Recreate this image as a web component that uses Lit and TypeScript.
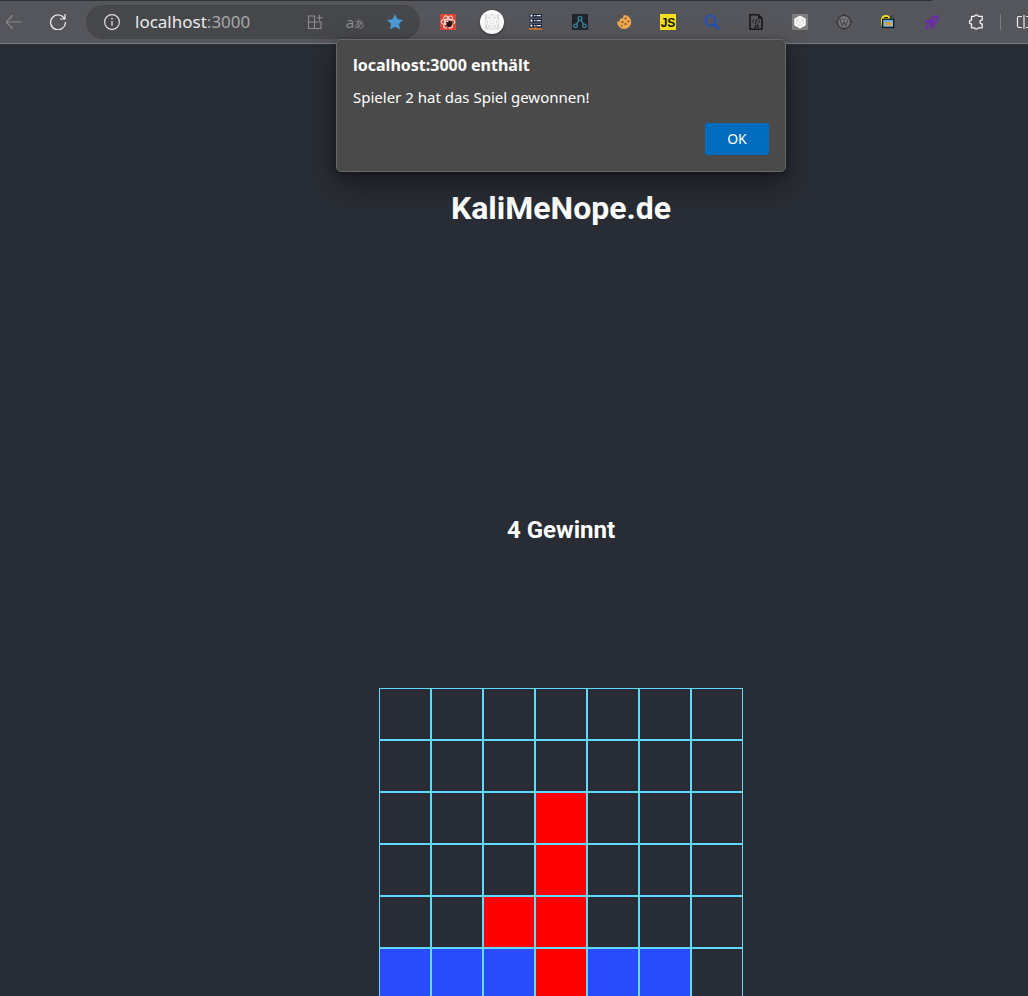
import { LitElement, html, css, svg } from "lit";
import { customElement } from "lit/decorators.js";
import { classMap } from "lit/directives/class-map.js";

const BOARD = [
  ".......",
  ".......",
  "...R...",
  "...R...",
  "..RR...",
  "BBBRBB.",
];

const icon = (content: unknown, size = 16) =>
  html`<svg width=${size} height=${size} viewBox="0 0 16 16" fill="none" aria-hidden="true">${content}</svg>`;

const atom = (stroke: string, hub: string) => svg`
  <g stroke=${stroke} stroke-width="1.1">
    <ellipse cx="8" cy="8" rx="6.8" ry="2.7"/>
    <ellipse cx="8" cy="8" rx="6.8" ry="2.7" transform="rotate(60 8 8)"/>
    <ellipse cx="8" cy="8" rx="6.8" ry="2.7" transform="rotate(120 8 8)"/>
  </g>
  <circle cx="8" cy="8" r="1.4" fill=${hub}/>`;

const EXTENSIONS: { name: string; art: unknown; round?: boolean }[] = [
  {
    name: "React Developer Tools",
    art: svg`<rect width="16" height="16" fill="#dc4436"/>${atom("#f6dcd8", "#fff")}
      <ellipse cx="9.300" cy="10" rx="2.600" ry="3.200" transform="rotate(35 9.300 10)" fill="#25120f"/>
      <path d="M5.800 8.300 8 9.500M5.500 11.500l2.500-.8M7 14l1.200-1.800M12.300 6.500l-1.500 1.800M13.500 10h-2" stroke="#25120f" stroke-width=".8"/>`,
  },
  {
    name: "React",
    round: true,
    art: svg`<rect x=".5" y=".5" width="15" height="15" rx="1" fill="#e0e0e0"/>${atom("#f9f9f9", "#fff")}`,
  },
  {
    name: "Server",
    art: svg`${[0, 5, 10].map(
      (y) => svg`<rect x="1.500" y=${y} width="12.500" height="3.500" rx="1" fill="#14213f"/>
        <circle cx="3.500" cy=${y + 1.7} r="1.100" fill="#fff"/>
        <path d=${`M6 ${y + 1.7}h1.500M8.500 ${y + 1.7}h4.500`} stroke="#dfe5f0" stroke-width="1.200"/>`
    )}<path d="M1 14.900h13M7.500 13v2.500" stroke="#e2792a" stroke-width="1.500"/>`,
  },
  {
    name: "Graph",
    art: svg`<rect width="16" height="16" fill="#20242b"/>
      <g stroke="#3f93ab" stroke-width="1.200"><circle cx="8" cy="4.500" r="2"/><circle cx="3.600" cy="11.800" r="1.800"/><circle cx="12.400" cy="11.800" r="1.800"/>
      <path d="M7 6.300 4.500 10M9 6.300l2.500 3.700"/></g>`,
  },
  {
    name: "Cookies",
    art: svg`<path d="M6 4.300c1.200-.2 1.500-1.500 1.300-2.900 1-.4 2.400-.3 3.600.2A7 7 0 1 1 1.200 7.500c1.200.4 2.600-.1 2.600-1.400.2-1 1-1.600 2.200-1.800z" fill="#f1a850"/>
      <g fill="#6b452c"><circle cx="9.500" cy="4.500" r=".9"/><circle cx="12.500" cy="7.500" r=".9"/><circle cx="6.500" cy="8" r=".9"/><circle cx="9.500" cy="10" r="1"/><circle cx="5.500" cy="11.800" r=".8"/><circle cx="3" cy="2.500" r=".9"/><circle cx="5.300" cy="1.500" r=".5"/></g>`,
  },
  {
    name: "JavaScript",
    art: svg`<rect width="16" height="16" fill="#f7df1e"/><text class="js" x="8" y="12.500" text-anchor="middle">JS</text>`,
  },
  {
    name: "Search",
    art: svg`<circle cx="6.500" cy="6.500" r="5" stroke="#2350b8" stroke-width="2.200"/><path d="m10 10 5 5" stroke="#2350b8" stroke-width="2.500"/>`,
  },
  {
    name: "Script",
    art: svg`<path d="M2 .8h8.500L14 4.300v11H2z" stroke="#19191b" stroke-width="1.600"/><path d="M10 .8v4h4z" fill="#19191b"/>
      <path d="M6 5.500 4.300 7.500 6 9.300M10 5.500l1.700 2L10 9.300M8.600 5.300l-1.200 4.200M7.500 11v2.500H6M10.500 11H9v1.200h1.300v1.300H8.800" stroke="#19191b" stroke-width="1"/>`,
  },
  {
    name: "Cube",
    art: svg`<rect width="16" height="16" fill="#7e7e7e"/><path d="m8 1.500 5.700 3.200v6.600L8 14.500l-5.700-3.200V4.700z" fill="#fff"/>
      <path d="m8 4 3.400 1.900v4L8 11.900l-3.400-2v-4zM4.600 5.900 8 7.900l3.400-2M8 7.900v4" stroke="#cfcfcf" stroke-width=".8"/>`,
  },
  {
    name: "WordPress",
    art: svg`<circle cx="8" cy="8" r="6.600" fill="#77787a" stroke="#39393b" stroke-width="1.300"/>
      <path d="m3.800 5.500 2.400 6.500L8 7.500l1.700 4.500L12 5.500M3 5.300h3M6.800 5.300h2.800" stroke="#48494b" stroke-width="1.100"/>
      <path d="M8 0v2M8 14v2M0 8h2M14 8h2" stroke="#303032" stroke-width="1.300"/>`,
  },
  {
    name: "Window",
    art: svg`<path d="M1 6C1 2 4 .8 6.500 1c2 0 3.500 1.500 3.500 4H3v7H1.500z" fill="#f1e11d"/><path d="M4 3.500h4M10 3.500 12.500 1.500" stroke="#222" stroke-width="1"/>
      <rect x="2.700" y="5.200" width="11" height="8.200" fill="#6fc0ec" stroke="#10151b" stroke-width="1.300"/>
      <path d="M3.500 6.800h9.500" stroke="#58a5d0" stroke-width="1"/>
      <rect x="5.500" y="8" width="6" height="3.500" fill="#e79a2b"/>`,
  },
  {
    name: "Rocket",
    art: svg`<path d="M14.800 1.200c-4-.3-7 1.500-9 4.300L2.300 6 1 9l3 .4L7 12.300l.4 2.700 3-1.300.3-3.400c3-2.200 4.400-5.200 4.100-9.100z" fill="#6a2fa5"/>
      <circle cx="10.700" cy="5.300" r="1.200" fill="#55565b"/><path d="M3.500 10.500C1.800 11 1.300 13 1.200 15c2-.1 4-.7 4.300-2.500z" fill="#6a2fa5"/>`,
  },
  {
    name: "Extensions",
    art: svg`<path d="M3.500 2.300h3a2 2 0 0 1 3.800 0h3.900v3.900h-.8a1.900 1.900 0 0 0 0 3.700h.8v3.900h-3.900a2 2 0 0 1-3.800 0h-3V9.900h-.6a1.900 1.900 0 0 1 0-3.700h.6z" stroke="#f4f4f5" stroke-width="1.300" stroke-linejoin="round"/>`,
  },
];

@customElement("browser-toolbar")
class BrowserToolbar extends LitElement {
  static styles = css`
    :host {
      display: flex;
      align-items: center;
      height: 43px;
      overflow: hidden;
      background: #55565b;
      border-bottom: 1px solid #7b7c80;
      position: relative;
      font-family: "Noto Sans", sans-serif;
    }
    .tabs {
      position: absolute;
      top: 0;
      left: 0;
      right: 96px;
      height: 1px;
      background: #303136;
    }
    button {
      border: 0;
      padding: 0;
      margin: 0;
      background: none;
      display: grid;
      place-items: center;
      flex: none;
      font-family: inherit;
    }
    svg {
      display: block;
    }
    .nav {
      display: flex;
      flex: none;
      margin-left: -8px;
    }
    .tool {
      width: 44px;
      height: 34px;
    }
    .address {
      display: flex;
      align-items: center;
      flex: none;
      width: 334px;
      height: 34px;
      margin: 0 6px;
      border-radius: 17px;
      background: #46474a;
    }
    .info {
      width: 34px;
      margin: 0 6px 0 9px;
    }
    .field {
      flex: 1;
      display: flex;
      min-width: 0;
      font-size: 17px;
      line-height: 24px;
      color: #ececec;
    }
    .port {
      color: #a8a8aa;
    }
    .small {
      width: 40px;
      height: 34px;
    }
    .small:last-child {
      margin-right: 5px;
    }
    .translate {
      color: #8c8c8e;
      font-family: "Noto Sans", "Noto Sans CJK JP", sans-serif;
      font-size: 15px;
    }
    .kana {
      font-size: 10px;
    }
    .round {
      width: 24px;
      height: 24px;
      display: grid;
      place-items: center;
      border-radius: 50%;
      background: #fff;
      box-shadow: 0 1px 3px #2228;
    }
    .js {
      font: bold 12px "Liberation Sans", sans-serif;
      fill: #111;
    }
    .divider {
      flex: none;
      width: 1px;
      height: 16px;
      background: #7c7d81;
      margin: 0 15px 0 2px;
    }
  `;

  render() {
    return html`
      <div class="tabs"></div>
      <div class="nav">
        <button class="tool" aria-label="Back">
          ${icon(svg`<path d="M0 8h16M7 1 0 8l7 7" stroke="#8b8c90" stroke-width="1.1"/>`)}
        </button>
        <button class="tool" aria-label="Reload">
          ${icon(svg`<path d="M14.600 5A7.400 7.400 0 1 0 15.400 8M15 0v5h-5" stroke="#f0f0f0" stroke-width="1.200"/>`)}
        </button>
      </div>
      <div class="address">
        <button class="info" aria-label="Site information">
          ${icon(svg`<circle cx="8" cy="8" r="7.400" stroke="#dcdcdc" stroke-width="1.200"/><path d="M8 7v5" stroke="#dcdcdc" stroke-width="1.200"/><circle cx="8" cy="4.600" r=".9" fill="#dcdcdc"/>`)}
        </button>
        <div class="field"><span>localhost</span><span class="port">:3000</span></div>
        <button class="small" aria-label="Install app">
          ${icon(svg`<path d="M8.500 2H1.500v12.500H14V8H1.500M7.500 2v12.500M12.500.8v6M9.500 3.800h6" stroke="#8c8c8e" stroke-width="1.100"/>`)}
        </button>
        <button class="small translate" aria-label="Translate">
          <span>a<span class="kana">あ</span></span>
        </button>
        <button class="small" aria-label="Favourite">
          ${icon(svg`<path d="m8 0 2.500 5.200 5.500.7-4 3.900 1 5.700L8 12.800l-5 2.700 1-5.700L0 5.900l5.500-.7z" fill="#4c9ad6"/>`)}
        </button>
      </div>
      ${EXTENSIONS.map(
        (e) => html`<button class="tool" aria-label=${e.name}>
          <span class=${classMap({ round: !!e.round })}>${icon(e.art)}</span>
        </button>`
      )}
      <span class="divider"></span>
      <button aria-label="Split screen">
        ${icon(svg`<path d="M6 2.500H3a1.500 1.500 0 0 0-1.500 1.500v8A1.500 1.500 0 0 0 3 13.500h3M8 1v14M10 2.500h3a1.500 1.500 0 0 1 1.500 1.500v8a1.500 1.500 0 0 1-1.500 1.500h-3" stroke="#eee" stroke-width="1.200"/>`)}
      </button>
    `;
  }
}

@customElement("game-board")
class GameBoard extends LitElement {
  static styles = css`
    :host {
      display: grid;
      grid-template-columns: repeat(7, 52px);
      grid-auto-rows: 52px;
    }
    .cell {
      border: 1px solid #61dafb;
    }
    .red {
      background: #f00;
    }
    .blue {
      background: #2a4bfa;
    }
  `;

  render() {
    return BOARD.map((row) =>
      [...row].map(
        (c) => html`<div class=${classMap({ cell: true, red: c === "R", blue: c === "B" })}></div>`
      )
    );
  }
}

@customElement("app-root")
class AppRoot extends LitElement {
  static styles = css`
    :host {
      display: block;
      height: 100vh;
      overflow: hidden;
      position: relative;
      background: #282c34;
      color: #fff;
    }
    main {
      display: flex;
      flex-direction: column;
      align-items: center;
      padding: 146px 0 0 94px;
      font-family: Roboto, sans-serif;
    }
    h1 {
      margin: 0;
      font-size: 32px;
      line-height: 36px;
    }
    h2 {
      margin: 290px 0 144px;
      font-size: 24px;
      line-height: 28px;
    }
    .alert {
      position: absolute;
      top: 39px;
      left: 94px;
      right: 0;
      margin: 0 auto;
      box-sizing: border-box;
      width: 450px;
      padding: 13px 16px 16px;
      border: 1px solid #66676a;
      border-radius: 5px;
      background: #4a4a4a;
      color: #fff;
      box-shadow: 0 12px 28px #0006, 0 2px 6px #0004;
      font-family: "Noto Sans", sans-serif;
      font-size: 15px;
      line-height: 24px;
    }
    .title {
      margin: 0 0 8px;
      font-size: 16px;
      font-weight: 700;
    }
    .message {
      margin: 0 0 14px;
    }
    .ok {
      display: block;
      margin-left: auto;
      width: 64px;
      height: 32px;
      padding: 0 0 2px;
      border: 0;
      border-radius: 2px;
      background: #006cbe;
      color: #fff;
      font: 14px "Noto Sans", sans-serif;
    }
  `;

  render() {
    return html`
      <browser-toolbar></browser-toolbar>
      <main>
        <h1>KaliMeNope.de</h1>
        <h2>4 Gewinnt</h2>
        <game-board></game-board>
      </main>
      <dialog class="alert" open aria-labelledby="alert-title">
        <p class="title" id="alert-title">localhost:3000 enthält</p>
        <p class="message">Spieler 2 hat das Spiel gewonnen!</p>
        <button class="ok">OK</button>
      </dialog>
    `;
  }
}
